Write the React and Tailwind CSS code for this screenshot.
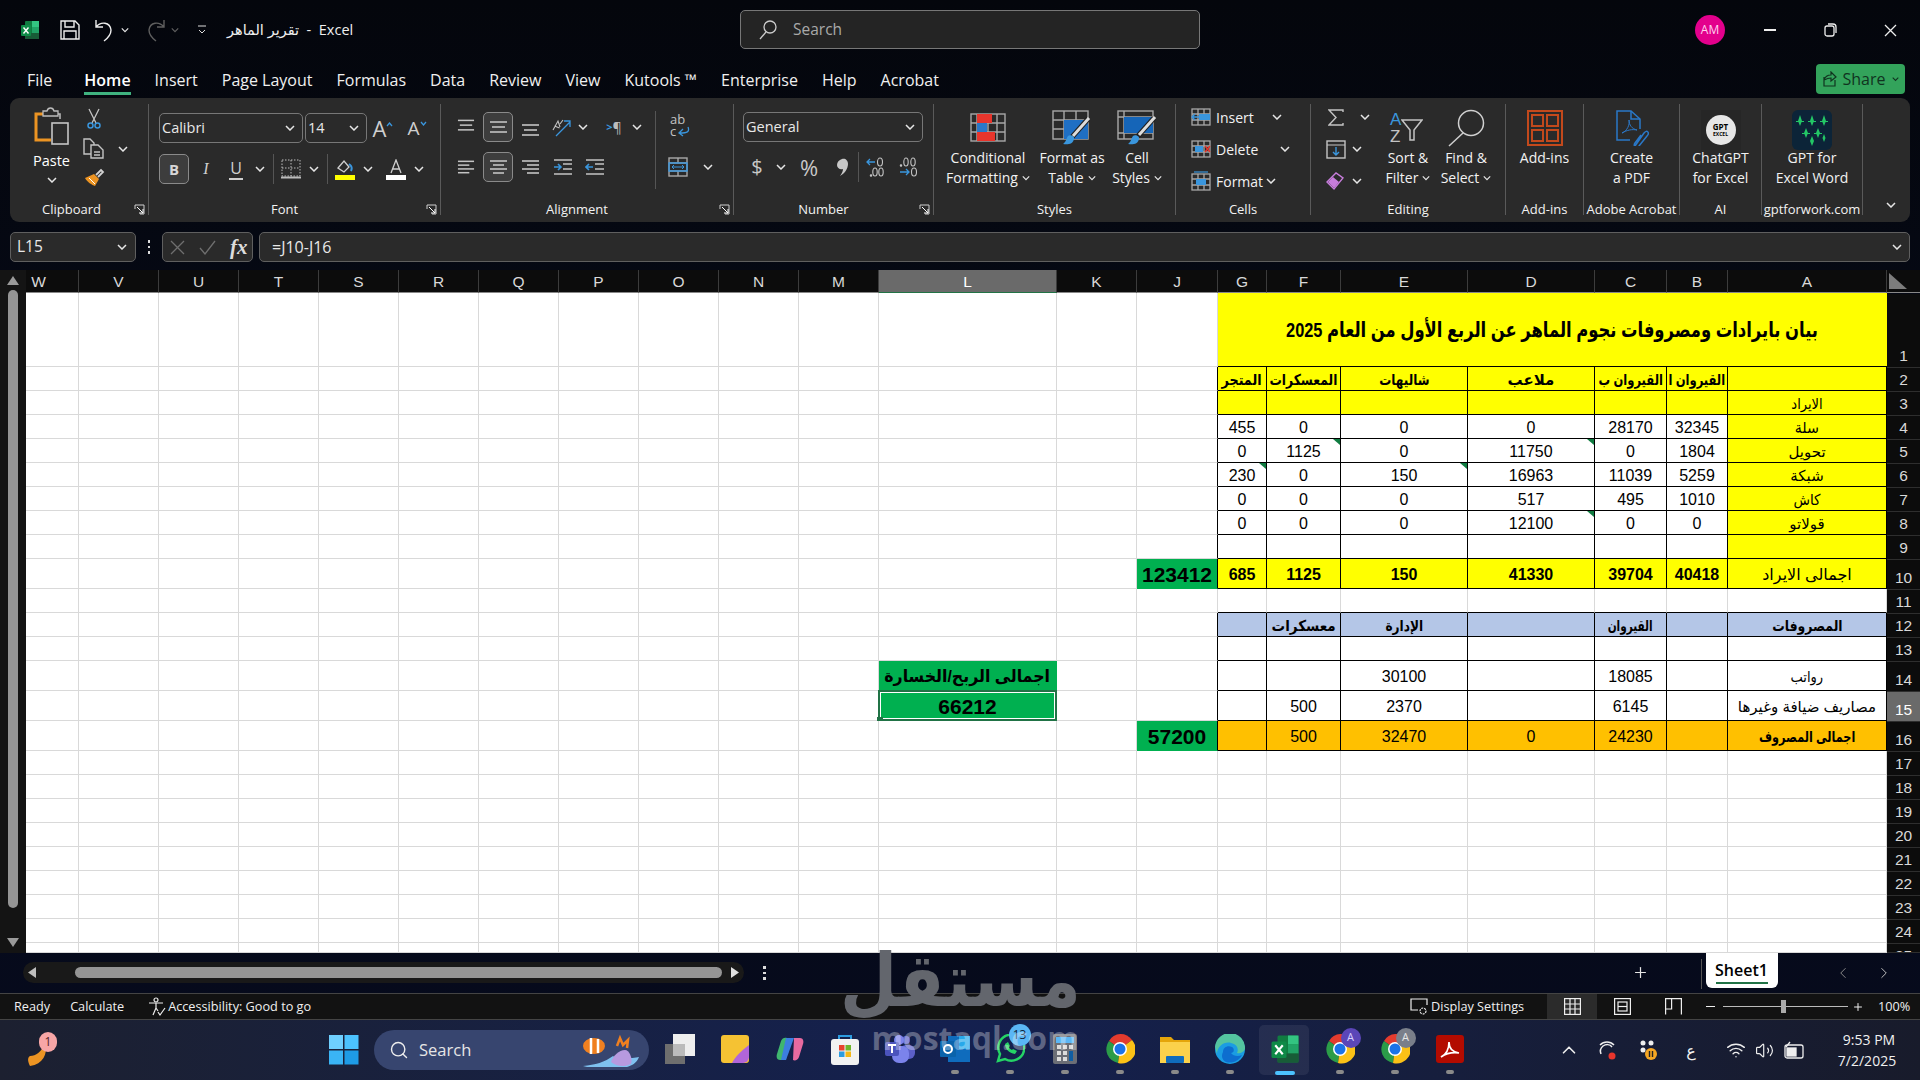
import React from 'react';
import { Search, Plus, ChevronLeft, ChevronRight, ChevronUp, Volume2, Wifi } from 'lucide-react';

const G = '#c4c4c4', BL = '#3a96dd';
const Caret = ({ c = '#e6e6e6', w = 10 }) => (
  <svg className="shrink-0" width={w} height="6" viewBox="0 0 10 6" fill="none"><path d="M1 1l4 4 4-4" stroke={c} strokeWidth="1.5" /></svg>
);
const CaretCell = ({ className = 'w-[18px]' }) => <div className={`flex items-center justify-center shrink-0 ${className}`}><Caret /></div>;
const Launcher = () => (
  <svg width="11" height="11" viewBox="0 0 11 11" fill="none" stroke="#cfcfcf" strokeWidth="1"><path d="M1 5V1h9v9H6" /><path d="M3 3l6 6M9 5v4H5" stroke="#fff" /></svg>
);
const Lines = ({ rows, blue }) => (
  <svg width="19" height="17" viewBox="0 0 19 17" stroke={G} strokeWidth="1.6">
    {rows.map(([x1, x2, y], i) => <line key={i} x1={x1} x2={x2} y1={y} y2={y} />)}
  </svg>
);
const IconCell = ({ className = '', children }) => <div className={`flex items-center justify-center shrink-0 h-[30px] ${className}`}>{children}</div>;
const SelBox = ({ children, className = '' }) => <div className={`flex items-center justify-center w-[30px] h-[30px] shrink-0 rounded-[5px] border border-[#8a8a8a] bg-[#3d3d3d] ${className}`}>{children}</div>;
const VDiv = ({ className = '' }) => <div className={`w-px h-[30px] bg-[#555] shrink-0 ${className}`} />;

function Group({ className, label, launcher, children, last }) {
  return (
    <div className={`relative flex flex-col h-[111px] shrink-0 ${last ? '' : 'border-r border-[#5a5a5a]'} ${className}`}>
      <div className="flex-1 min-h-0">{children}</div>
      <div className="h-[22px] pt-[9px] text-center leading-[14px] text-[13px] text-[#f2f2f2] whitespace-nowrap">{label}</div>
      {launcher && <div className="absolute right-[3px] bottom-[0px]"><Launcher /></div>}
    </div>
  );
}

function LargeBtn({ className, icon, a, b, caret }) {
  return (
    <div className={`flex flex-col items-center shrink-0 ${className}`}>
      <div className="h-[44px] flex items-center justify-center pt-[3px]">{icon}</div>
      <div className="text-[14px] leading-[20px] text-[#f2f2f2] whitespace-nowrap">{a}</div>
      <div className="flex items-center gap-[4px] text-[14px] leading-[20px] text-[#f2f2f2] whitespace-nowrap">{b}{caret && <Caret w={8} />}</div>
    </div>
  );
}

const CondIcon = () => (
  <svg width="36" height="30" viewBox="0 0 36 30" fill="none">
    <g stroke="#a8a8a8" strokeWidth="1.4"><rect x="1" y="1" width="34" height="27" /><path d="M7 1v27M18 1v27M27 1v27M1 10h34M1 19h34" /></g>
    <rect x="7" y="1" width="15" height="9" fill="#e8352c" /><rect x="7" y="10" width="10" height="9" fill="#2a78c8" /><rect x="7" y="19" width="18" height="9" fill="#e8352c" />
  </svg>
);
const TableIcon = () => (
  <svg width="40" height="36" viewBox="0 0 40 36" fill="none">
    <g stroke="#a8a8a8" strokeWidth="1.4"><rect x="1" y="1" width="35" height="28" /><path d="M12 1v28M24 1v28M1 10h35M1 19h35" /></g>
    <rect x="12" y="10" width="24" height="19" fill="#1f6fc4" />
    <path d="M36 9L20 27" stroke="#1f1f1f" strokeWidth="5" /><path d="M37 8L21 26" stroke="#ddd" strokeWidth="3" />
    <path d="M11 34c5 1 10 0 11-5 1-3-4-5-6-3-2 3-2 6-5 8z" fill="#3a96dd" />
  </svg>
);
const CellStyleIcon = () => (
  <svg width="40" height="36" viewBox="0 0 40 36" fill="none">
    <g stroke="#a8a8a8" strokeWidth="1.4"><rect x="1" y="1" width="35" height="28" /><path d="M7 1v28M1 7h35M1 23h35" /></g>
    <rect x="7" y="7" width="29" height="16" fill="#1565b8" />
    <path d="M37 8L21 26" stroke="#1f1f1f" strokeWidth="5" /><path d="M38 7L22 25" stroke="#ddd" strokeWidth="3" />
    <path d="M11 34c5 1 10 0 11-5 1-3-4-5-6-3-2 3-2 6-5 8z" fill="#3a96dd" />
  </svg>
);

function Clipboard() {
  return (
    <Group className="w-[139px] ml-0" label={<span className="pr-[15px]">Clipboard</span>} launcher>
      <div className="flex h-full">
        <div className="w-[73px] flex flex-col items-center pl-[10px]">
          <svg className="mt-[3px]" width="36" height="38" viewBox="0 0 36 38" fill="none">
            <path d="M12 7H2v26h15" stroke="#ec9423" strokeWidth="3" />
            <path d="M12 7h14v5" stroke="#bdbdbd" strokeWidth="1.5" />
            <path d="M9 4h4c1-4 6-4 7 0h4v5H9z" fill="#2b2b2b" stroke="#bdbdbd" strokeWidth="1.3" />
            <rect x="18" y="16" width="16" height="21" fill="#2b2b2b" stroke="#c6c6c6" strokeWidth="1.6" />
          </svg>
          <div className="text-[14.5px] leading-[20px] mt-[6px] text-white">Paste</div>
          <div className="mt-[6px]"><Caret /></div>
        </div>
        <div className="flex flex-col w-[56px] shrink-0">
          <div className="h-[32px] flex items-center pl-[4px]">
            <svg width="14" height="21" viewBox="0 0 14 21" fill="none"><path d="M2 1l7 14M12 1L5 15" stroke={G} strokeWidth="1.3" /><circle cx="3.5" cy="17.5" r="2.5" stroke={BL} strokeWidth="1.5" /><circle cx="10.5" cy="17.5" r="2.5" stroke={BL} strokeWidth="1.5" /></svg>
          </div>
          <div className="h-[32px] flex items-center gap-[14px]">
            <svg className="shrink-0" width="21" height="21" viewBox="0 0 21 21" fill="none" stroke={G} strokeWidth="1.4"><path d="M8 16H1V1h6l4 4v2" /><path d="M8 7h7l5 5v8H8z" /><path d="M11 14h6M11 17h6" /></svg>
            <Caret />
          </div>
          <div className="h-[32px] flex items-center pl-px">
            <svg width="21" height="20" viewBox="0 0 21 20" fill="none"><path d="M12 7l5-5 2 2-5 5" stroke="#d2d2d2" strokeWidth="1.8" /><path d="M10 6l5 5-4 7C8 17 3 14 1 10z" fill="#ec9423" /><path d="M5 10l6 6" stroke="#fff" strokeWidth="1" /></svg>
          </div>
        </div>
      </div>
    </Group>
  );
}

const Sel = ({ className, t }) => (
  <div className={`flex items-center justify-between h-[30px] rounded-[5px] border border-[#777] shrink-0 pl-[2px] pr-[7px] text-[14.5px] text-[#e8e8e8] ${className}`}>
    <span>{t}</span><Caret />
  </div>
);

function FontGroup() {
  return (
    <Group className="w-[292px]" label={<span className="pr-[20px]">Font</span>} launcher>
      <div className="pt-[8px] pl-[10px]">
        <div className="flex items-center">
          <Sel className="w-[144px]" t="Calibri" />
          <Sel className="w-[62px] ml-[2px]" t="14" />
          <div className="w-[28px] ml-[2px] flex items-start justify-center text-[22px] leading-[30px] text-[#cfcfcf]">A<svg className="mt-[9px]" width="7" height="5" viewBox="0 0 7 5" fill="none"><path d="M1 4l2.5-3L6 4" stroke={BL} strokeWidth="1.3" /></svg></div>
          <div className="w-[28px] ml-[6px] flex items-start justify-center text-[19px] leading-[32px] text-[#cfcfcf]">A<svg className="mt-[9px]" width="7" height="5" viewBox="0 0 7 5" fill="none"><path d="M1 1l2.5 3L6 1" stroke={BL} strokeWidth="1.3" /></svg></div>
        </div>
        <div className="flex items-center mt-[10px]">
          <SelBox><span className="text-[15px] font-bold text-[#d6d6d6]">B</span></SelBox>
          <IconCell className="w-[30px] ml-[2px] italic text-[16px] text-[#cfcfcf]"><span className="[font-family:'Liberation_Serif',serif]">I</span></IconCell>
          <IconCell className="w-[30px] text-[16px] text-[#cfcfcf]"><span className="border-b-2 border-[#cfcfcf] leading-[19px] px-px">U</span></IconCell>
          <CaretCell />
          <VDiv className="ml-[4px]" />
          <IconCell className="w-[28px] ml-[3px]">
            <svg width="20" height="20" viewBox="0 0 20 20" fill="none" stroke="#bcbcbc"><rect x="1" y="1" width="18" height="16" strokeDasharray="1.5 1.5" /><path d="M10 1v16M1 9h18" strokeDasharray="1.5 1.5" /><path d="M0 18.5h20" strokeWidth="2" /></svg>
          </IconCell>
          <CaretCell />
          <VDiv className="ml-[4px]" />
          <IconCell className="w-[28px] ml-[3px]">
            <svg width="20" height="21" viewBox="0 0 20 21" fill="none"><path d="M3 9l6-7 5 6-5 5z" stroke="#cfcfcf" strokeWidth="1.3" /><path d="M14 5c3 2 3 5 2 7" stroke={BL} strokeWidth="2" /><rect y="16" width="20" height="5" fill="#ffff00" /></svg>
          </IconCell>
          <CaretCell />
          <IconCell className="w-[30px] ml-[4px]">
            <svg width="20" height="21" viewBox="0 0 20 21" fill="none"><path d="M5 14L10 1l5 13M7 10h6" stroke="#cfcfcf" strokeWidth="1.3" /><rect y="16" width="20" height="5" fill="#fff" /></svg>
          </IconCell>
          <CaretCell className="w-[16px]" />
        </div>
      </div>
    </Group>
  );
}

function Alignment() {
  const T = <Lines rows={[[1, 18, 1], [3, 16, 6], [1, 18, 11]]} />;
  const M = <Lines rows={[[1, 18, 3], [3, 16, 8], [1, 18, 13]]} />;
  const B = <Lines rows={[[1, 18, 6], [3, 16, 11], [1, 18, 16]]} />;
  const L = <Lines rows={[[1, 18, 2], [1, 13, 6], [1, 18, 10], [1, 13, 14]]} />;
  const C = <Lines rows={[[1, 18, 2], [4, 15, 6], [1, 18, 10], [4, 15, 14]]} />;
  const R = <Lines rows={[[1, 18, 2], [6, 18, 6], [1, 18, 10], [6, 18, 14]]} />;
  const Indent = ({ dir }) => (
    <svg width="19" height="17" viewBox="0 0 19 17" fill="none"><path d="M1 1h18M10 5h9M10 10h9M1 15h18" stroke={G} strokeWidth="1.6" /><path d={dir ? 'M1 8h7M5 5l3 3-3 3' : 'M8 8H1M4 5L1 8l3 3'} stroke={BL} strokeWidth="1.6" /></svg>
  );
  return (
    <Group className="w-[293px]" label={<span className="pr-[20px]">Alignment</span>} launcher>
      <div className="flex pt-[8px] pl-[16px]">
        <div className="w-[198px] shrink-0">
          <div className="flex items-center">
            <IconCell className="w-[18px]">{T}</IconCell>
            <SelBox className="ml-[8px]">{M}</SelBox>
            <IconCell className="w-[28px] ml-[3px]">{B}</IconCell>
            <IconCell className="w-[26px] ml-[4px]">
              <svg width="21" height="21" viewBox="0 0 21 21" fill="none" overflow="visible"><path d="M2 13l5-9 2 6M3.500 9l5 2M9 7l3-4" stroke={G} strokeWidth="1.1" /><path d="M5 19L19 5M13 4h6v6" stroke={BL} strokeWidth="1.3" /></svg>
            </IconCell>
            <CaretCell />
            <IconCell className="w-[28px] ml-[8px]"><span className="flex items-center text-[14px] text-[#bdbdbd]"><span className="text-[#3a96dd] font-bold text-[11px]">&gt;</span>¶</span></IconCell>
            <CaretCell />
          </div>
          <div className="flex items-center mt-[10px]">
            <IconCell className="w-[18px]">{L}</IconCell>
            <SelBox className="ml-[8px]">{C}</SelBox>
            <IconCell className="w-[28px] ml-[3px]">{R}</IconCell>
            <IconCell className="w-[26px] ml-[5px]"><Indent dir /></IconCell>
            <IconCell className="w-[26px] ml-[6px]"><Indent /></IconCell>
          </div>
        </div>
        <div className="w-px h-[78px] bg-[#555] -mt-px" />
        <div className="pl-[14px]">
          <div className="w-[22px] h-[30px] flex flex-col justify-center -mt-[2px] text-[13px] leading-[12px] text-[#c4c4c4]">
            <div>ab</div>
            <div className="flex items-center">c
              <svg className="ml-px" width="13" height="11" viewBox="0 0 13 11" fill="none" stroke={BL} strokeWidth="1.3"><path d="M11 1c2 5-1 6-8 6M6 3L2 7l4 3" /></svg>
            </div>
          </div>
          <div className="flex items-center mt-[12px] -ml-[2px]">
            <IconCell className="w-[20px]">
              <svg width="20" height="20" viewBox="0 0 20 20" fill="none" stroke="#a8a8a8" strokeWidth="1.4"><rect x="1" y="1" width="18" height="18" /><path d="M1 6h18M1 14h18M10 1v5M10 14v5" /><rect x="1" y="6" width="18" height="8" stroke={BL} /><path d="M4 10h12M6 8l-2 2 2 2M14 8l2 2-2 2" stroke={BL} strokeWidth="1" /></svg>
            </IconCell>
            <CaretCell className="w-[20px] ml-[10px]" />
          </div>
        </div>
      </div>
    </Group>
  );
}

function NumberGroup() {
  return (
    <Group className="w-[200px]" label={<span className="pr-[20px]">Number</span>} launcher>
      <div className="pt-[8px] pl-[9px]">
        <Sel className="w-[180px]" t="General" />
        <div className="flex items-center mt-[10px] text-[#c8c8c8]">
          <IconCell className="w-[28px] text-[20px]">$</IconCell>
          <CaretCell className="w-[18px] ml-px" />
          <IconCell className="w-[28px] ml-[5px] text-[22px]">%</IconCell>
          <IconCell className="w-[28px] ml-[5px]">
            <svg width="11" height="18" viewBox="0 0 11 18" fill="#c8c8c8"><path d="M5 1c3-1 6 1 6 5 0 5-4 10-8 12 2-3 3-5 3-7-3 1-6-1-6-4 0-3 2-5 5-6z" /></svg>
          </IconCell>
          <VDiv className="ml-[2px]" />
          <IconCell className="w-[28px] ml-[2px]">
            <svg width="20" height="20" viewBox="0 0 20 20" fill="none" stroke={G} strokeWidth="1.100"><ellipse cx="15" cy="5" rx="2.500" ry="4" /><path d="M10 5H2M5 2L2 5l3 3" stroke={BL} strokeWidth="1.3" /><circle cx="6" cy="18.500" r=".7" fill={G} /><ellipse cx="10" cy="15" rx="2.200" ry="4" /><ellipse cx="16" cy="15" rx="2.200" ry="4" /></svg>
          </IconCell>
          <IconCell className="w-[28px] ml-[5px]">
            <svg width="20" height="20" viewBox="0 0 20 20" fill="none" stroke={G} strokeWidth="1.100"><circle cx="3" cy="8.500" r=".7" fill={G} /><ellipse cx="8" cy="5" rx="2.200" ry="4" /><ellipse cx="15" cy="5" rx="2.200" ry="4" /><ellipse cx="16" cy="15" rx="2.500" ry="4" /><path d="M2 15h9M8 12l3 3-3 3" stroke={BL} strokeWidth="1.3" /></svg>
          </IconCell>
        </div>
      </div>
    </Group>
  );
}

function Styles() {
  return (
    <Group className="w-[242px]" label="Styles">
      <div className="flex pl-[10px]">
        <LargeBtn className="w-[88px]" icon={<CondIcon />} a="Conditional" b="Formatting" caret />
        <LargeBtn className="w-[80px]" icon={<TableIcon />} a="Format as" b="Table" caret />
        <LargeBtn className="w-[50px]" icon={<CellStyleIcon />} a="Cell" b="Styles" caret />
      </div>
    </Group>
  );
}

function Cells() {
  const Row = ({ icon, t, w }) => (
    <div className="h-[32px] flex items-center text-[14px] text-[#f2f2f2]">
      <div className="w-[20px] flex justify-center">{icon}</div>
      <div className={`ml-[5px] ${w}`}>{t}</div>
      <Caret />
    </div>
  );
  const base = <g stroke="#a8a8a8" strokeWidth="1.3" fill="none"><rect x="1" y="1" width="18" height="16" /><path d="M7 1v16M13 1v16M1 6h18M1 12h18" /></g>;
  return (
    <Group className="w-[135px]" label="Cells">
      <div className="-mt-[3px] pl-[15px]">
        <Row w="w-[56px]" t="Insert" icon={<svg width="20" height="18" viewBox="0 0 20 18" fill="none">{base}<rect x="8" y="6" width="11" height="6" fill={BL} /><path d="M8 9H1M4 6L1 9l3 3" stroke={BL} strokeWidth="1.3" /></svg>} />
        <Row w="w-[64px]" t="Delete" icon={<svg width="20" height="18" viewBox="0 0 20 18" fill="none">{base}<rect x="4" y="6" width="8" height="6" fill={BL} /><path d="M14 6l5 6M19 6l-5 6" stroke="#e8352c" strokeWidth="1.4" /></svg>} />
        <Row w="w-[50px]" t="Format" icon={<svg width="20" height="20" viewBox="0 0 20 20" fill="none"><g stroke="#a8a8a8" strokeWidth="1.3"><rect x="1" y="3" width="18" height="16" /><path d="M7 3v16M13 3v16M1 8h18M1 14h18" /></g><rect x="5" y="8" width="10" height="6" fill={BL} /><path d="M3 1h14" stroke={BL} strokeWidth="1.2" /></svg>} />
      </div>
    </Group>
  );
}

function Editing() {
  return (
    <Group className="w-[195px]" label={<span className="pl-[0px]">Editing</span>}>
      <div className="flex">
        <div className="w-[65px] -mt-[3px] shrink-0 pl-[15px]">
          <div className="h-[32px] flex items-center">
            <div className="w-[20px] flex justify-center"><svg width="16" height="17" viewBox="0 0 16 17" fill="none"><path d="M15 3V1H1l7 7.5L1 16h14v-2" stroke={G} strokeWidth="1.4" /></svg></div>
            <div className="ml-[14px]"><Caret /></div>
          </div>
          <div className="h-[32px] flex items-center">
            <svg width="20" height="19" viewBox="0 0 20 19" fill="none"><rect x="1" y="1" width="18" height="17" stroke={G} strokeWidth="1.4" /><path d="M1 5h18" stroke={G} /><path d="M10 7v8M7 12l3 3 3-3" stroke={BL} strokeWidth="1.4" /></svg>
            <div className="ml-[6px]"><Caret /></div>
          </div>
          <div className="h-[32px] flex items-center">
            <svg width="20" height="20" viewBox="0 0 20 20" fill="none"><path d="M1 11l9-9 7 5-9 11z" stroke="#c77ddb" strokeWidth="1.4" /><path d="M2 11l5-5 6 5-5 6z" fill="#c77ddb" /></svg>
            <div className="ml-[6px]"><Caret /></div>
          </div>
        </div>
        <LargeBtn className="w-[64px]" a="Sort &" b="Filter" caret icon={
          <div className="flex items-start w-[36px]">
            <span className="text-[17px] leading-[17px] font-normal flex flex-col [font-family:'Liberation_Sans',sans-serif]"><span className="text-[#3a96dd]">A</span><span className="text-[#c4c4c4]">Z</span></span>
            <svg className="mt-[8px]" width="22" height="22" viewBox="0 0 22 22" fill="none"><path d="M1 1h20l-8 10v10H9V11z" stroke={G} strokeWidth="1.5" /></svg>
          </div>
        } />
        <LargeBtn className="w-[52px]" a="Find &" b="Select" caret icon={
          <svg width="38" height="38" viewBox="0 0 38 38" fill="none"><circle cx="24" cy="14" r="12.5" stroke="#d0d0d0" strokeWidth="1.5" /><path d="M16 24L2 37" stroke="#d0d0d0" strokeWidth="1.5" /></svg>
        } />
      </div>
    </Group>
  );
}

function Extras() {
  return (
    <>
      <Group className="w-[78px]" label="Add-ins">
        <LargeBtn className="w-full" a="Add-ins" icon={
          <svg width="36" height="36" viewBox="0 0 36 36" fill="none" stroke="#c3491c" strokeWidth="2"><rect x="1" y="1" width="34" height="34" /><rect x="5" y="5" width="11" height="11" /><rect x="20" y="5" width="11" height="11" /><rect x="5" y="20" width="11" height="11" /><rect x="20" y="20" width="11" height="11" /></svg>
        } />
      </Group>
      <Group className="w-[96px]" label="Adobe Acrobat">
        <LargeBtn className="w-full" a="Create" b="a PDF" icon={
          <svg width="34" height="36" viewBox="0 0 34 36" fill="none" stroke="#2a78c8" strokeWidth="1.5"><path d="M15 30H2V1h14l9 8v10" /><path d="M16 1v8h9" /><path d="M7 23c5-2 8-8 7-13 0 5 3 9 8 10-5-1-10 0-15 3z" strokeWidth="1" /><path d="M20 36l9-13c3-4 6 0 3 3l-8 10c-3 3-6 0-4-3l6-8" /></svg>
        } />
      </Group>
      <Group className="w-[82px]" label="AI">
        <LargeBtn className="w-full" a="ChatGPT" b="for Excel" icon={
          <div className="w-[40px] h-[40px] bg-[#262626] flex items-center justify-center mt-[4px]">
            <div className="w-[30px] h-[30px] rounded-full bg-[#e6e6e6] flex flex-col items-center justify-center text-black text-[8px] font-bold leading-[8px]">GPT<span className="text-[5px] leading-[6px]">EXCEL</span></div>
          </div>
        } />
      </Group>
      <Group className="w-[101px]" label="gptforwork.com">
        <LargeBtn className="w-full" a="GPT for" b="Excel Word" icon={
          <div className="w-[40px] h-[40px] rounded-[6px] bg-[#0c2438] mt-[4px] flex items-center justify-center">
            <svg width="36" height="36" viewBox="0 0 36 36" fill="#23c766"><path d="M6 3l2 6-2 5-2-5zM18 3l2 6-2 5-2-5zM30 3l2 6-2 5-2-5zM12 16l2 5-2 5-2-5zM24 16l2 5-2 5-2-5zM18 24l2 5-2 5-2-5zM30 22l1.5 4-1.5 4-1.5-4zM2 9h8v1H2zM14 9h8v1h-8zM26 9h8v1h-8zM8 21h8v1H8zM20 21h8v1h-8z" /></svg>
          </div>
        } />
      </Group>
    </>
  );
}

function Ribbon() {
  return (
    <div className="relative mx-[10px] h-[124px] rounded-[9px] bg-[#2a2a2a] flex pt-[6px] shrink-0">
      <Clipboard /><FontGroup /><Alignment /><NumberGroup /><Styles /><Cells /><Editing /><Extras />
      <div className="absolute right-[13px] bottom-[14px]"><Caret w={12} /></div>
    </div>
  );
}

const XlLogo = ({ s = 20 }) => (
  <svg width={s} height={s} viewBox="0 0 20 20"><rect x="5" y="1" width="14" height="18" rx="1" fill="#107c41" /><rect x="12" y="1" width="7" height="6" fill="#33c481" /><rect x="12" y="7" width="7" height="6" fill="#21a366" /><rect x="5" y="13" width="14" height="6" fill="#185c37" /><rect x="1" y="5" width="10" height="11" rx="1" fill="#0e8a47" /><path d="M3.5 7.5l5 6M8.5 7.5l-5 6" stroke="#fff" strokeWidth="1.4" /></svg>
);

function TitleBar() {
  return (
    <div className="h-[56px] flex items-center shrink-0 text-[#efefef] relative pt-[4px]">
      <div className="w-[60px] flex justify-end pr-[20px] shrink-0"><XlLogo /></div>
      <svg width="20" height="20" viewBox="0 0 20 20" fill="none" stroke="#eee" strokeWidth="1.4"><path d="M1 1h14l4 4v14H1z" /><path d="M5 1v6h9V1M4 19v-8h12v8" /></svg>
      <svg className="ml-[15px]" width="20" height="24" viewBox="0 0 20 24" fill="none" stroke="#eee" strokeWidth="1.4"><path d="M1 2v7h7M1 9c5-6 14-5 15 3 0 4-3 8-7 11" /></svg>
      <div className="ml-[6px]"><Caret w={8} /></div>
      <svg className="ml-[16px]" width="20" height="24" viewBox="0 0 20 24" fill="none" stroke="#5f5f5f" strokeWidth="1.4"><path d="M19 2v7h-7M19 9C14 3 5 4 4 12c0 4 3 8 7 11" /></svg>
      <div className="ml-[6px]"><Caret w={8} c="#5f5f5f" /></div>
      <svg className="ml-[18px]" width="10" height="10" viewBox="0 0 10 10" fill="none" stroke="#ddd"><path d="M1 1h8M2 5l3 3 3-3" /></svg>
      <div className="ml-[20px] text-[14.5px] whitespace-nowrap">تقرير الماهر&nbsp; -&nbsp; Excel</div>
      <div className="absolute left-[740px] top-[10px] w-[460px] h-[39px] rounded-[5px] border border-[#777] bg-[#242424] flex items-center pl-[18px] gap-[16px] text-[#a9a9a9] text-[15.5px]">
        <svg width="18" height="20" viewBox="0 0 18 20" fill="none" stroke="#ccc" strokeWidth="1.3"><circle cx="11" cy="7" r="6" /><path d="M7 12l-6 7" /></svg>
        Search
      </div>
      <div className="absolute left-[1695px] top-[15px] w-[30px] h-[30px] rounded-full bg-[#e3008c] flex items-center justify-center text-[12px] text-[#ffd2ee]">AM</div>
      <div className="absolute left-[1764px] top-[29px] w-[12px] h-[1.5px] bg-[#eee]" />
      <svg className="absolute left-[1824px] top-[23px]" width="13" height="14" viewBox="0 0 13 14" fill="none" stroke="#eee" strokeWidth="1.3"><rect x="1" y="3" width="9" height="10" rx="2" /><path d="M4 1h5c2 0 3 1 3 3v6" /></svg>
      <svg className="absolute left-[1884px] top-[24px]" width="13" height="13" viewBox="0 0 13 13" stroke="#eee" strokeWidth="1.3"><path d="M1 1l11 11M12 1L1 12" /></svg>
    </div>
  );
}

const menu = ['File', 'Home', 'Insert', 'Page Layout', 'Formulas', 'Data', 'Review', 'View', 'Kutools ™', 'Enterprise', 'Help', 'Acrobat'];
function MenuBar() {
  return (
    <div className="h-[42px] flex items-start pl-[27px] gap-[24px] text-[16px] text-[#f0f0f0] shrink-0 relative">
      {menu.map((m) => (
        <div key={m} className={`h-[39px] pt-[12px] leading-[24px] whitespace-nowrap border-b-[3px] ${m === 'File' ? 'mr-[8px]' : ''} ${m === 'Home' ? 'border-[#3fb27f] font-semibold text-white' : 'border-transparent'}`}>{m}</div>
      ))}
      <div className="absolute left-[1816px] top-[8px] w-[89px] h-[30px] rounded-[4px] bg-[#33a35b] flex items-center justify-center gap-[6px] text-[16px] text-[#10331f]">
        <svg width="14" height="16" viewBox="0 0 14 16" fill="none" stroke="#10331f" strokeWidth="1.2"><path d="M1 6v9h11V9M1 9c1-3 4-5 7-5V1l5 5-5 4V7c-3 0-5 1-7 2" /></svg>
        Share
        <Caret w={7} c="#10331f" />
      </div>
    </div>
  );
}

function FormulaBar() {
  return (
    <div className="flex mx-[10px] mt-[10px] h-[30px] text-[15.5px] text-[#e8e8e8] shrink-0">
      <div className="w-[126px] rounded-[5px] border border-[#5f5f5f] bg-[#2a2a2a] flex items-center justify-between pl-[6px] pr-[8px]">L15<Caret /></div>
      <div className="w-[26px] flex flex-col items-center justify-center gap-[3px]">
        <i className="w-[2.5px] h-[2.5px] bg-[#ddd]" /><i className="w-[2.5px] h-[2.5px] bg-[#ddd]" /><i className="w-[2.5px] h-[2.5px] bg-[#ddd]" />
      </div>
      <div className="w-[91px] rounded-[5px] border border-[#5f5f5f] bg-[#2a2a2a] flex items-center pl-[7px] gap-[14px]">
        <svg width="15" height="15" viewBox="0 0 15 15" stroke="#6f6f6f" strokeWidth="1.3"><path d="M1 1l13 13M14 1L1 14" /></svg>
        <svg width="17" height="15" viewBox="0 0 17 15" fill="none" stroke="#6f6f6f" strokeWidth="1.3"><path d="M1 8l5 6L16 1" /></svg>
        <span className="italic font-bold text-[21px] leading-[28px] text-[#dcdcdc] [font-family:'Liberation_Serif',serif]">fx</span>
      </div>
      <div className="flex-1 ml-[6px] rounded-[5px] border border-[#5f5f5f] bg-[#2a2a2a] flex items-center justify-between pl-[12px] pr-[6px] text-[16px]">
        <span>=J10-J16</span>
        <Caret w={12} />
      </div>
    </div>
  );
}

const cols = ['W', 'V', 'U', 'T', 'S', 'R', 'Q', 'P', 'O', 'N', 'M', 'L', 'K', 'J', 'G', 'F', 'E', 'D', 'C', 'B', 'A'];
const tableCols = ['G', 'F', 'E', 'D', 'C', 'B', 'A'];
const YEL = 'bg-[#ffff00]', BLU = 'bg-[#b4c6e7]', ORG = 'bg-[#ffc000]', GRN = 'bg-[#00b050]';
const row = (r, o) => Object.fromEntries(Object.entries(o).map(([k, v]) => [`${k}${r}`, v]));
const data = {
  ...row(2, { G: 'المتجر', F: 'المعسكرات', E: 'شاليهات', D: 'ملاعب', C: 'القيروان ب', B: 'القيروان ا' }),
  ...row(3, { A: 'الايراد' }),
  ...row(4, { A: 'سلة', B: '32345', C: '28170', D: '0', E: '0', F: '0', G: '455' }),
  ...row(5, { A: 'تحويل', B: '1804', C: '0', D: '11750', E: '0', F: '1125', G: '0' }),
  ...row(6, { A: 'شبكة', B: '5259', C: '11039', D: '16963', E: '150', F: '0', G: '230' }),
  ...row(7, { A: 'كاش', B: '1010', C: '495', D: '517', E: '0', F: '0', G: '0' }),
  ...row(8, { A: 'قولاتو', B: '0', C: '0', D: '12100', E: '0', F: '0', G: '0' }),
  ...row(10, { A: 'اجمالى الايراد', B: '40418', C: '39704', D: '41330', E: '150', F: '1125', G: '685', J: '123412' }),
  ...row(12, { A: 'المصروفات', C: 'القيروان', E: 'الإدارة', F: 'معسكرات' }),
  ...row(14, { A: 'رواتب', C: '18085', E: '30100', L: 'اجمالى الربح/الخسارة' }),
  ...row(15, { A: 'مصاريف ضيافة وغيرها', C: '6145', E: '2370', F: '500', L: '66212' }),
  ...row(16, { A: 'اجمالى المصروف', C: '24230', D: '0', E: '32470', F: '500', J: '57200' }),
};
const tri = new Set(['F5', 'D5', 'G6', 'E6', 'D8']);
const ar = {
  A3: 'text-[15px] scale-x-[0.87]', A4: 'text-[15px] scale-x-[0.95]', A5: 'text-[15px]', A6: 'text-[15px]', A7: 'text-[15px] scale-x-[0.9]', A8: 'text-[15px]',
  A10: 'text-[16px]', A12: 'text-[15px] font-bold scale-x-[0.83]', A14: 'text-[15px] scale-x-[0.87]', A15: 'text-[15px]', A16: 'text-[15px] font-bold scale-x-[0.75]',
  G2: 'text-[15px] font-bold scale-x-[0.85]', F2: 'text-[15px] font-bold scale-x-[0.82]', E2: 'text-[15px] font-bold scale-x-[0.8]', D2: 'text-[15px] font-bold', C2: 'text-[15px] font-bold scale-x-[0.77]', B2: 'text-[15px] font-bold scale-x-[0.77]',
  F12: 'text-[15px] font-bold scale-x-[0.9]', E12: 'text-[15px] font-bold scale-x-[0.81]', C12: 'text-[15px] font-bold scale-x-[0.7]', L14: 'text-[17px] font-bold scale-x-[0.93]',
};

function cellClass(c, r) {
  const id = `${c}${r}`;
  const inTable = tableCols.includes(c) && ((r >= 2 && r <= 10) || (r >= 12 && r <= 16));
  let bg = 'bg-white';
  if (inTable) {
    if (r === 2 || r === 3 || r === 10 || (c === 'A' && r < 10)) bg = YEL;
    if (r === 12) bg = BLU;
    if (r === 16) bg = ORG;
  }
  if (id === 'J10' || id === 'J16' || id === 'L14' || id === 'L15') bg = GRN;
  let rb = 'border-r-[#d9d9d9]';
  let bb = 'border-b-[#d9d9d9]';
  if (inTable || (c === 'J' && ((r >= 2 && r <= 10) || (r >= 12 && r <= 16)))) rb = 'border-r-black';
  if (inTable || (tableCols.includes(c) && r === 11)) bb = 'border-b-black';
  if (id === 'J10' || id === 'J16') bb = 'border-b-[#00b050]';
  if (id === 'L14') { rb = 'border-r-[#00b050]'; bb = 'border-b-[#00b050]'; }
  let txt = 'text-[16px]';
  if (r === 10 && c !== 'A') txt = 'text-[16px] font-bold';
  if (id === 'J10' || id === 'J16' || id === 'L15') txt = 'text-[21px] font-bold';
  return `${bg} ${rb} ${bb} ${txt}`;
}

function Sheet() {
  const rows = Array.from({ length: 25 }, (_, i) => i + 1);
  return (
    <div className="h-[683px] flex shrink-0 relative">
      <div className="w-[26px] shrink-0 flex flex-col items-center bg-[#141414] py-[6px]">
        <svg className="shrink-0" width="12" height="9" viewBox="0 0 12 9" fill="#9a9a9a"><path d="M6 0l6 9H0z" /></svg>
        <div className="w-[10px] h-[618px] rounded-full bg-[#959595] mt-[5px] shrink-0" />
        <svg className="shrink-0 mt-auto" width="12" height="9" viewBox="0 0 12 9" fill="#9a9a9a"><path d="M6 9l6-9H0z" /></svg>
      </div>
      <div className="grid flex-1 overflow-hidden text-black grid-cols-[53px_repeat(10,80px)_178px_80px_81px_49px_74px_127px_127px_72px_61px_159px_33px] grid-rows-[23px_74px_repeat(8,24px)_30px_repeat(3,24px)_repeat(3,30px)_repeat(8,24px)_10px]">
        {cols.map((c) => (
          <div key={c} className={`flex items-center justify-center pt-[2px] text-[15.5px] border-r border-[#3c3c3c] border-b ${c === 'W' ? 'pr-[27px]' : ''} ${c === 'L' ? 'bg-[#6a6a6a] text-white border-b-[#217346]' : 'bg-[#0c0c0c] text-[#d9d9d9] border-b-[#888]'}`}>{c}</div>
        ))}
        <div className="bg-[#0c0c0c] flex items-center justify-start pl-[2px] border-b border-b-[#888]">
          <svg width="18" height="16" viewBox="0 0 18 16" fill="#7c7c7c"><path d="M0 0l18 16H0z" /></svg>
        </div>
        {rows.map((r) => (
          <React.Fragment key={r}>
            {cols.map((c) => {
              if (r === 1 && tableCols.includes(c)) {
                if (c !== 'G') return null;
                return (
                  <div key={c} dir="rtl" className="col-span-7 bg-[#ffff00] border-b border-b-black flex items-center justify-center whitespace-nowrap pt-[1px]">
                    <span className="inline-block shrink-0 text-[21px] font-bold scale-x-[0.78]">بيان بايرادات ومصروفات نجوم الماهر عن الربع الأول من العام 2025</span>
                  </div>
                );
              }
              const id = `${c}${r}`;
              return (
                <div key={c} dir="rtl" className={`relative flex items-center justify-center whitespace-nowrap border-r border-b pt-[3px] ${cellClass(c, r)}`}>
                  {data[id] && <span className={`inline-block shrink-0 ${ar[id] || ''}`}>{data[id]}</span>}
                  {tri.has(id) && <i className="absolute top-0 right-0 w-0 h-0 border-t-[6px] border-t-[#107c41] border-l-[7px] border-l-transparent" />}
                  {id === 'L15' && (
                    <>
                      <i className="absolute -top-px -left-px -right-px -bottom-px border-2 border-[#217346] outline outline-1 -outline-offset-3 outline-white" />
                      <i className="absolute -left-[2px] -bottom-[3px] w-[6px] h-[6px] bg-[#217346]" />
                    </>
                  )}
                </div>
              );
            })}
            <div className={`flex justify-center overflow-hidden leading-[22px] text-[15.5px] border-b border-b-[#2e2e2e] ${r === 25 ? 'items-start pt-[2px]' : 'items-end pb-[0px] translate-y-px'} ${r === 15 ? 'bg-[#6a6a6a] text-white' : 'bg-[#0c0c0c] text-[#d9d9d9]'}`}>{r}</div>
          </React.Fragment>
        ))}
      </div>
    </div>
  );
}

function TabBar() {
  return (
    <div className="h-[40px] flex items-start shrink-0 text-[#e8e8e8] relative">
      <div className="ml-[23px] mt-[9px] w-[721px] h-[21px] rounded-full bg-[#191919] flex items-center justify-between px-[5px]">
        <svg width="8" height="11" viewBox="0 0 8 11" fill="#bdbdbd"><path d="M8 0v11L0 5.5z" /></svg>
        <div className="w-[647px] h-[11px] rounded-full bg-[#959595] ml-[30px]" />
        <svg width="8" height="11" viewBox="0 0 8 11" fill="#e0e0e0"><path d="M0 0v11l8-5.5z" /></svg>
      </div>
      <div className="ml-[19px] mt-[13px] flex flex-col gap-[3px]">
        <i className="w-[2.5px] h-[2.5px] bg-[#ddd]" /><i className="w-[2.5px] h-[2.5px] bg-[#ddd]" /><i className="w-[2.5px] h-[2.5px] bg-[#ddd]" />
      </div>
      <Plus className="ml-[866px] mt-[11px]" size={17} color="#e6e6e6" strokeWidth={1.7} />
      <div className="ml-[52px] mt-[6px] w-px h-[30px] bg-[#555]" />
      <div className="ml-[4px] w-[72px] h-[35px] bg-white rounded-b-[6px] text-black text-[16px] flex flex-col items-center pt-[6px] [font-family:'Open_Sans',sans-serif] font-semibold">
        <span className="leading-[22px]">Sheet1</span>
        <i className="w-[52px] h-[2px] bg-[#217346] mt-[1px]" />
      </div>
      <ChevronLeft className="ml-[56px] mt-[11px]" size={18} color="#8a8a8a" strokeWidth={1.3} />
      <ChevronRight className="ml-[23px] mt-[11px]" size={18} color="#c0c0c0" strokeWidth={1.3} />
    </div>
  );
}

function StatusBar() {
  return (
    <div className="h-[27px] flex items-center justify-between shrink-0 bg-[#121212] border-t border-b border-[#444] text-[12.7px] text-[#f0f0f0] pl-[14px] pr-[10px]">
      <div className="flex items-center pt-px">
        <span>Ready</span>
        <span className="ml-[20px]">Calculate</span>
        <svg className="ml-[24px]" width="18" height="20" viewBox="0 0 18 20" fill="none" stroke="#eee" strokeWidth="1.2"><circle cx="8" cy="3" r="2" /><path d="M1 6h14M8 6v5l-3 7M8 11l2 3M10 15l2 3 5-7" /></svg>
        <span className="ml-[2px]">Accessibility: Good to go</span>
      </div>
      <div className="flex items-center h-full">
        <svg width="19" height="18" viewBox="0 0 19 18" fill="none" stroke="#eee" strokeWidth="1.2"><path d="M8 12H1V1h16v6" /><circle cx="13" cy="13" r="3" strokeDasharray="2 1" /></svg>
        <span className="ml-[2px] w-[116px]">Display Settings</span>
        <div className="w-[50px] h-full bg-[#2b2b2b] flex items-center justify-center">
          <svg width="17" height="17" viewBox="0 0 17 17" fill="none" stroke="#eee" strokeWidth="1.2"><rect x=".6" y=".6" width="15.8" height="15.8" /><path d="M6 1v15M11 1v15M1 6h15M1 11h15" /></svg>
        </div>
        <div className="w-[51px] flex items-center justify-center">
          <svg width="17" height="17" viewBox="0 0 17 17" fill="none" stroke="#eee" strokeWidth="1.2"><rect x=".6" y=".6" width="15.8" height="15.8" /><rect x="4" y="4" width="9" height="9" /><path d="M4 8.5h9" /></svg>
        </div>
        <div className="w-[50px] flex items-center justify-center">
          <svg width="17" height="17" viewBox="0 0 17 17" fill="none" stroke="#eee" strokeWidth="1.2"><path d="M.6 16.4V.6h15.8v15.8M.6 11h6V.6" /></svg>
        </div>
        <div className="ml-[8px] w-[9px] h-px bg-[#eee]" />
        <div className="ml-[8px] w-[125px] h-px bg-[#bbb] relative">
          <i className="absolute left-[58px] -top-[6px] w-[5px] h-[13px] bg-[#aaa]" />
        </div>
        <Plus className="ml-[4px]" size={12} color="#eee" />
        <span className="ml-[14px] w-[32px] whitespace-nowrap">100%</span>
      </div>
    </div>
  );
}

function ChromeIcon() {
  return (
    <svg width="30" height="30" viewBox="0 0 30 30">
      <path d="M15 15L4 7a13.500 13.500 0 0 1 23-1z" fill="#e33b2e" />
      <path d="M15 15L4 7a14 14 0 0 0 9 22z" fill="#2b9c48" />
      <path d="M15 15l12-9a14 14 0 0 1-14 23z" fill="#fbc116" />
      <circle cx="15" cy="15" r="7" fill="#fff" /><circle cx="15" cy="15" r="5.5" fill="#1a73e8" />
    </svg>
  );
}
const Dot = ({ active }) => <i className={`absolute left-1/2 -translate-x-1/2 ${active ? 'bottom-[5px] w-[20px] h-[4px] bg-[#4cc2ff]' : 'bottom-[6px] w-[8px] h-[4px] bg-[#8a8a8a]'} rounded-full`} />;
const TB = ({ children, dot, active }) => (
  <div className="relative w-[55px] h-[60px] flex items-center justify-center shrink-0 pb-[3px]">
    {active && <i className="absolute left-[2px] right-[3px] top-[5px] bottom-[5px] rounded-[5px] bg-[#ffffff12]" />}
    <span className="relative flex">{children}</span>
    {dot && <Dot active={active} />}
  </div>
);
const Badge = ({ className, children }) => <span className={`absolute flex items-center justify-center rounded-full text-[11px] ${className}`}>{children}</span>;

function Taskbar() {
  return (
    <div className="h-[60px] flex items-center shrink-0 bg-gradient-to-r from-[#1c2030] via-[#14204f] to-[#181b2b] text-[#f0f0f0] relative overflow-hidden">
      <div className="relative w-[36px] h-[36px] ml-[26px] shrink-0">
        <svg width="30" height="36" viewBox="0 0 30 36"><path d="M19 12c3 10-2 20-15 22C2 30 1 26 4 24c6 0 11-4 15-12z" fill="#ec9423" /></svg>
        <Badge className="left-[13px] top-0 w-[18px] h-[20px] bg-[#f7a6a6] text-[#522] text-[12px]">1</Badge>
      </div>
      <div className="ml-[254px] w-[55px] flex justify-center shrink-0">
        <svg width="30" height="30" viewBox="0 0 30 30" fill="#4cc2ff"><rect width="14" height="14" fill="#6fcfff" /><rect x="15.500" width="14" height="14" fill="#4cc2ff" /><rect y="15.500" width="14" height="14" fill="#3ab4f5" /><rect x="15.500" y="15.500" width="14" height="14" fill="#1e9be6" /></svg>
      </div>
      <div className="relative ml-[3px] w-[275px] h-[40px] rounded-full bg-[#37456f] flex items-center pl-[15px] gap-[10px] text-[16.5px] text-[#e6e6e6] shrink-0">
        <Search size={20} color="#eee" strokeWidth={1.7} />
        <span>Search</span>
        <svg className="absolute right-[2px] top-[2px]" width="66" height="36" viewBox="0 0 66 36"><ellipse cx="13" cy="14" rx="11" ry="8" fill="#f08020" /><path d="M10 6v16M17 7v14" stroke="#fff" strokeWidth="2.500" /><path d="M36 14l3-8 3 7 5-5-1 8" stroke="#f08020" strokeWidth="2.500" fill="none" /><path d="M2 34c12-1 22-4 30-10 4 4 20 2 26 1-2 6-8 9-12 10H6z" fill="#7fc1ef" /><path d="M30 30c2-6 8-12 14-12 4 0 8 8 6 14-6 3-14 3-20-2z" fill="#b79adf" /></svg>
      </div>
      <div className="flex ml-[3px] shrink-0">
        <TB><svg width="30" height="30" viewBox="0 0 30 30"><rect y="10" width="20" height="20" fill="#6e6e6e" /><rect x="8" y="0" width="22" height="22" fill="#eee" /><rect x="8" y="10" width="12" height="12" fill="#bbb" /></svg></TB>
        <TB><svg width="28" height="28" viewBox="0 0 28 28"><rect width="28" height="28" rx="3" fill="#f5c233" /><path d="M28 10v12a6 6 0 0 1-6 6H11c3-6 9-12 17-18z" fill="#b165d9" /></svg></TB>
        <TB><svg width="28" height="28" viewBox="0 0 28 28" fill="none"><path d="M18 3h6c3 0 4 3 3 6l-4 13c-1 3-4 4-6 3z" fill="#e86aa0" /><path d="M10 25H4c-3 0-4-3-3-6L5 6c1-3 4-4 6-3z" fill="#3fb66f" /><path d="M10 3h8l-8 22H5z" fill="#3c7ee0" /></svg></TB>
        <TB><svg width="28" height="32" viewBox="0 0 28 32" fill="none"><path d="M8 7V3h12v4" stroke="#2d9ce0" strokeWidth="2" /><rect y="6" width="28" height="26" rx="3" fill="#f2f2f2" /><rect x="8" y="12" width="5.500" height="5.500" fill="#e8432e" /><rect x="14.500" y="12" width="5.500" height="5.500" fill="#6eb52b" /><rect x="8" y="18.500" width="5.500" height="5.500" fill="#2d9ce0" /><rect x="14.500" y="18.500" width="5.500" height="5.500" fill="#f5b817" /></svg></TB>
        <TB><svg width="30" height="28" viewBox="0 0 30 28"><circle cx="21" cy="5" r="4" fill="#5b5fc7" /><rect x="15" y="10" width="15" height="14" rx="6" fill="#5b5fc7" /><circle cx="14" cy="5" r="5" fill="#7b83eb" /><rect x="7" y="11" width="17" height="17" rx="7" fill="#7b83eb" /><rect y="7" width="14" height="14" rx="2" fill="#4b53bc" /><path d="M3 10h8M7 10v8" stroke="#fff" strokeWidth="2" /></svg></TB>
        <TB dot><svg width="30" height="28" viewBox="0 0 30 28"><rect x="8" y="1" width="22" height="26" fill="#0f6cbd" /><rect x="19" y="1" width="11" height="13" fill="#28a8ea" /><rect y="6" width="16" height="16" rx="1" fill="#0a63ab" /><circle cx="8" cy="14" r="4" fill="none" stroke="#fff" strokeWidth="2" /></svg></TB>
        <TB dot><span className="relative flex"><svg width="30" height="30" viewBox="0 0 30 30" fill="none"><path d="M3 27l2-7A13 13 0 1 1 10 25z" stroke="#25d366" strokeWidth="2.500" /><path d="M10 10c0 5 4 9 10 10l2-3-4-2-1 1c-2-1-3-2-3-3l1-1-2-4z" fill="#25d366" /></svg><Badge className="left-[14px] -top-[10px] w-[22px] h-[22px] bg-[#5ab6f5] text-[#10233a] text-[12px]">13</Badge></span></TB>
        <TB dot><svg width="24" height="30" viewBox="0 0 24 30"><rect width="24" height="30" rx="2" fill="#6b6e76" /><rect x="3" y="3" width="18" height="6" fill="#5ab6f5" /><path d="M4 11h4v4H4zM10 11h4v4h-4zM4 17h4v4H4zM10 17h4v4h-4zM4 23h4v4H4zM10 23h4v4h-4z" fill="#dcdcdc" /><rect x="16" y="17" width="4" height="10" fill="#115ea3" /><rect x="16" y="11" width="4" height="4" fill="#dcdcdc" /></svg></TB>
        <TB dot><ChromeIcon /></TB>
        <TB dot><svg width="30" height="28" viewBox="0 0 30 28"><path d="M0 2h11l3 3h16v23H0z" fill="#e5a50a" /><rect y="7" width="30" height="21" fill="#fbd14b" /><rect x="6" y="21" width="18" height="7" rx="1" fill="#0f6cbd" /></svg></TB>
        <TB dot><svg width="30" height="30" viewBox="0 0 30 30"><circle cx="15" cy="15" r="15" fill="#1b9de2" /><path d="M2 20c0-8 8-13 14-11 6 1 8 6 6 10 3 1 7-1 8-4A15 15 0 0 0 0 13z" fill="#54c4a0" /><path d="M8 18c0-5 5-7 9-5 3 2 2 6-1 6 2 3 7 4 11 2-3 6-10 9-16 7-4-2-5-6-3-10z" fill="#0d6ecf" /></svg></TB>
        <TB dot active><XlLogo s={30} /></TB>
        <TB dot><span className="relative flex"><ChromeIcon /><Badge className="left-[16px] -top-[6px] w-[20px] h-[20px] bg-[#5b46b8] text-[#d8d0ff]">A</Badge></span></TB>
        <TB dot><span className="relative flex"><ChromeIcon /><Badge className="left-[16px] -top-[6px] w-[20px] h-[20px] bg-[#7a7f8a] text-[#e6e6e6]">A</Badge></span></TB>
        <TB dot><svg width="28" height="28" viewBox="0 0 28 28" fill="none"><rect width="28" height="28" rx="3" fill="#b30b00" /><path d="M5 22c6-3 8-9 8-15 0 6 3 10 10 11-6-1-12 0-18 4z" stroke="#fff" strokeWidth="1.700" /></svg></TB>
      </div>
      <ChevronUp className="ml-[81px] shrink-0" size={22} color="#eee" strokeWidth={1.8} />
      <svg className="ml-[18px] shrink-0" width="20" height="22" viewBox="0 0 20 22" fill="none" stroke="#eee" strokeWidth="1.5"><path d="M2 6c4-4 10-4 14 0M3 15a7 7 0 0 1 2-8c3-2 7-2 9 1" /><circle cx="14" cy="17" r="3.500" fill="#e8352c" stroke="none" /></svg>
      <svg className="ml-[20px] shrink-0" width="20" height="22" viewBox="0 0 20 22"><circle cx="5" cy="4" r="2.500" fill="#eee" /><circle cx="13" cy="4" r="2.500" fill="#eee" /><circle cx="5" cy="11" r="2.500" fill="#eee" /><circle cx="13" cy="15" r="6" fill="#f5a623" /><path d="M11.500 12v6M14.500 12v6" stroke="#222" strokeWidth="1.400" /></svg>
      <span className="ml-[18px] w-[30px] text-center text-[16px] shrink-0">ع</span>
      <Wifi className="ml-[20px] shrink-0" size={20} color="#eee" strokeWidth={1.7} />
      <Volume2 className="ml-[9px] shrink-0" size={19} color="#eee" strokeWidth={1.5} />
      <svg className="ml-[10px] shrink-0" width="22" height="18" viewBox="0 0 22 18" fill="none" stroke="#eee" strokeWidth="1.300"><rect x="1" y="4" width="18" height="13" rx="2" /><rect x="3" y="7" width="9" height="8" fill="#eee" /><path d="M6 1l-4 5" /></svg>
      <div className="ml-[30px] w-[62px] shrink-0 text-[14px] leading-[21px] text-center whitespace-nowrap"><div className="pl-[4px]">9:53 PM</div><div>7/2/2025</div></div>
    </div>
  );
}

export default function App() {
  return (
    <div className="relative w-[1920px] h-[1080px] overflow-hidden flex flex-col bg-gradient-to-b from-[#04060c] via-[#060b1a] to-[#060a1c] text-white [font-family:'Liberation_Sans','DejaVu_Sans',sans-serif]">
      <div className="flex flex-col shrink-0 [font-family:'Open_Sans','DejaVu_Sans',sans-serif]">
        <TitleBar />
        <MenuBar />
        <Ribbon />
        <FormulaBar />
      </div>
      <div className="h-[8px] shrink-0" />
      <Sheet />
      <div className="flex flex-col shrink-0 [font-family:'Open_Sans','DejaVu_Sans',sans-serif]">
        <TabBar />
        <StatusBar />
        <Taskbar />
      </div>
      <div dir="rtl" className="absolute left-[810px] top-[930px] w-[300px] text-center pointer-events-none">
        <span className="inline-block text-[74px] font-bold leading-[100px] text-[#63666d] scale-x-[0.89] [font-family:'DejaVu_Sans',sans-serif]">مستقل</span>
      </div>
      <div className="absolute left-[865px] top-[1018px] w-[220px] text-center text-[32px] font-bold leading-[40px] text-[#ffffff50] [font-family:'Open_Sans',sans-serif] pointer-events-none">mostaql.com</div>
    </div>
  );
}
